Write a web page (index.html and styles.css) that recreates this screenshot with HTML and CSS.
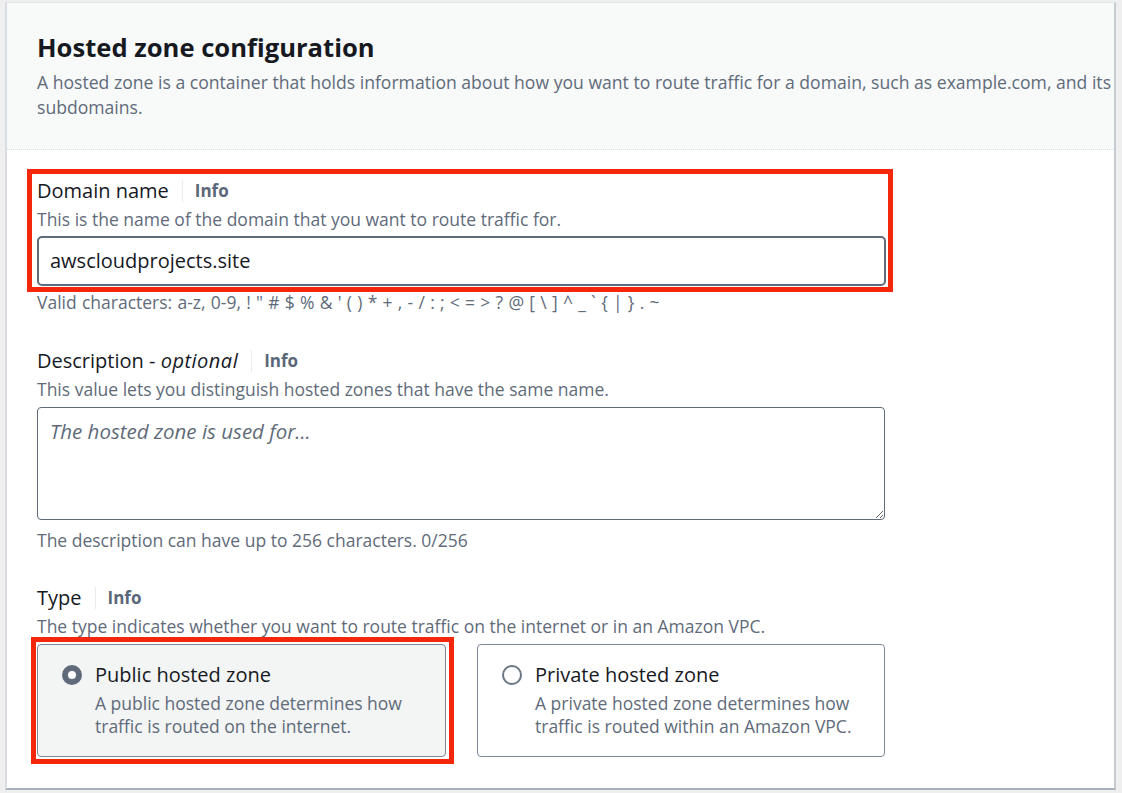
FILE: index.html
```html
<!DOCTYPE html>
<html lang="en">
<head>
<meta charset="utf-8">
<title>Hosted zone configuration</title>
<link rel="stylesheet" href="styles.css">
</head>
<body>
<section class="container">
  <header class="container-header">
    <h2 class="title">Hosted zone configuration</h2>
    <p class="header-desc">A hosted zone is a container that holds information about how you want to route traffic for a domain, such as example.com, and its subdomains.</p>
  </header>
  <div class="container-body">
    <div class="field field-domain annotated">
      <div class="label-row"><span class="label">Domain name</span><span class="info">Info</span></div>
      <div class="helper">This is the name of the domain that you want to route traffic for.</div>
      <div class="input">awscloudprojects.site</div>
    </div>
    <div class="constraint chars">Valid characters: a-z, 0-9, ! " # $ % &amp; ' ( ) * + , - / : ; &lt; = &gt; ? @ [ \ ] ^ _ ` { | } . ~</div>

    <div class="field field-gap">
      <div class="label-row"><span class="label">Description - <em>optional</em></span><span class="info">Info</span></div>
      <div class="helper">This value lets you distinguish hosted zones that have the same name.</div>
      <textarea class="textarea" placeholder="The hosted zone is used for..."></textarea>
    </div>
    <div class="constraint count">The description can have up to 256 characters. 0/256</div>

    <div class="field field-gap-type">
      <div class="label-row"><span class="label">Type</span><span class="info">Info</span></div>
      <div class="helper">The type indicates whether you want to route traffic on the internet or in an Amazon VPC.</div>
      <div class="tiles">
        <div class="tile tile-selected tile-annotated annotated">
          <span class="radio radio-on"></span>
          <div class="tile-text">
            <div class="tile-title">Public hosted zone</div>
            <div class="tile-desc">A public hosted zone determines how traffic is routed on the internet.</div>
          </div>
        </div>
        <div class="tile">
          <span class="radio radio-off"></span>
          <div class="tile-text">
            <div class="tile-title">Private hosted zone</div>
            <div class="tile-desc">A private hosted zone determines how traffic is routed within an Amazon VPC.</div>
          </div>
        </div>
      </div>
    </div>
  </div>
</section>
</body>
</html>
```
FILE: styles.css
```css
* { box-sizing: border-box; }

body {
  margin: 2px 6px 3px 5px;
  background: #efefef;
  font-family: "Open Sans", "Noto Sans", sans-serif;
  color: #16191f;
}

.container {
  background: #fff;
  border-top: 1px solid #e3e6e8;
  border-left: 2px solid #d9dde1;
  border-right: 2px solid #c6ccd2;
  border-bottom: 2px solid #a9b2ba;
}

.container-header {
  background: #f8f9f9;
  border-bottom: 1px dotted #dcdfe2;
  padding: 29px 0 29px 30px;
}

.title {
  margin: 0;
  font-size: 25.6px;
  line-height: 32px;
  font-weight: 700;
  color: #16191f;
}

.header-desc {
  margin: 6px 0 0;
  font-size: 17.6px;
  line-height: 25px;
  color: #5f6b7a;
}

.container-body {
  padding: 29px 30px 31px 30px;
}

.field {
  position: relative;
  width: 849px;
}

.field-gap { margin-top: 36px; }
.field-gap-type { margin-top: 35px; width: auto; }

.label-row {
  display: flex;
  align-items: center;
  font-size: 20px;
  line-height: 24px;
  color: #16191f;
}

.label em { font-style: italic; letter-spacing: 0.5px; }

.info {
  margin-left: 13px;
  padding-left: 12px;
  border-left: 1px solid #e9ebed;
  font-size: 17px;
  font-weight: 700;
  line-height: 22px;
  color: #5a6778;
}

.helper {
  margin-top: 5px;
  font-size: 17.5px;
  line-height: 22px;
  color: #5f6b7a;
}

.input {
  margin-top: 6px;
  height: 50px;
  border: 2px solid #5f6b7a;
  border-radius: 5px;
  padding: 0 11px 1px;
  display: flex;
  align-items: center;
  font-size: 20px;
  color: #16191f;
}

.constraint {
  margin-top: 5px;
  font-size: 17.5px;
  line-height: 22px;
  color: #5f6b7a;
}

.chars { word-spacing: 0.7px; }

.count { margin-top: 9px; }

.textarea {
  display: block;
  margin-top: 7px;
  width: 848px;
  height: 113px;
  border: 1px solid #5f6b7a;
  border-radius: 4px;
  padding: 11px 12px;
  font-family: "Open Sans", "Noto Sans", sans-serif;
  font-size: 20.5px;
  line-height: 24px;
  color: #16191f;
  background: #fff;
}

.textarea::placeholder {
  font-style: italic;
  color: #5f6b7a;
  opacity: 1;
}

.tiles {
  margin-top: 7px;
  display: grid;
  grid-template-columns: 409px 408px;
  column-gap: 31px;
}

.tile {
  position: relative;
  display: flex;
  align-items: flex-start;
  gap: 13px;
  height: 113px;
  border: 1px solid #7d8998;
  border-radius: 4px;
  padding: 18px 20px 18px 24px;
  background: #fff;
}

.tile-selected { background: #f3f4f4; }

.radio {
  flex: none;
  width: 20px;
  height: 20px;
  margin-top: 2px;
  border-radius: 50%;
  background: #fff;
}

.radio-on { border: 6px solid #5f6b7a; }
.radio-off { border: 2px solid #6b7785; }

.tile-title {
  font-size: 20px;
  line-height: 24px;
  color: #16191f;
}

.tile-desc {
  margin-top: 5px;
  font-size: 17.5px;
  line-height: 23px;
  color: #5f6b7a;
}

/* red annotation outlines drawn over the screenshot */
.annotated::after {
  content: "";
  position: absolute;
  border: 5px solid #f4260c;
  pointer-events: none;
}

.field-domain::after { top: -10px; left: -10px; right: -7px; bottom: -6px; }
.tile-annotated::after { top: -8px; left: -7px; right: -9px; bottom: -8px; }
```
